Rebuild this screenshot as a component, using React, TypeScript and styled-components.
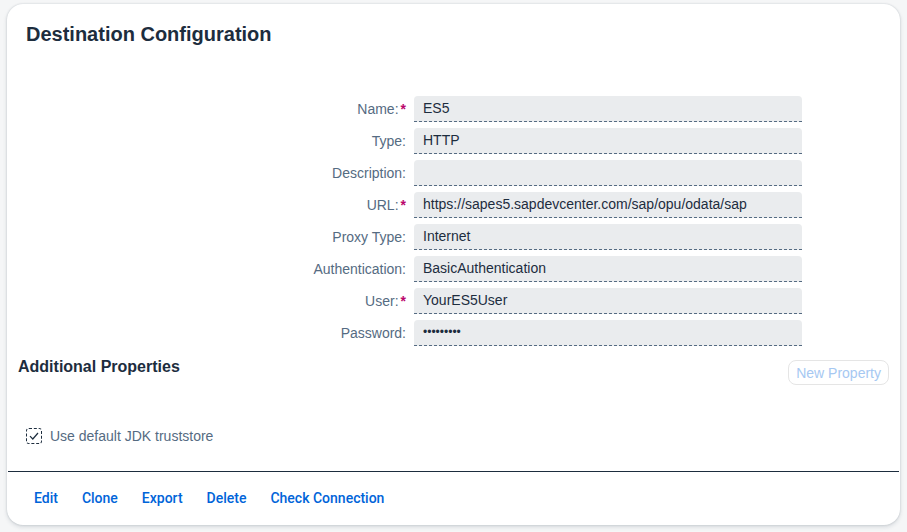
import React from 'react';
import styled, { createGlobalStyle } from 'styled-components';

const GlobalStyle = createGlobalStyle`
  html, body {
    margin: 0;
    padding: 0;
    background: #f5f6f7;
  }
  body {
    font-family: "Liberation Sans", Arial, sans-serif;
    color: #1d2d3e;
  }
`;

interface Field {
  label: string;
  value: string;
  required?: boolean;
}

const fields: Field[] = [
  { label: 'Name:', value: 'ES5', required: true },
  { label: 'Type:', value: 'HTTP' },
  { label: 'Description:', value: '' },
  { label: 'URL:', value: 'https://sapes5.sapdevcenter.com/sap/opu/odata/sap', required: true },
  { label: 'Proxy Type:', value: 'Internet' },
  { label: 'Authentication:', value: 'BasicAuthentication' },
  { label: 'User:', value: 'YourES5User', required: true },
  { label: 'Password:', value: '•••••••••' },
];

const actions = ['Edit', 'Clone', 'Export', 'Delete', 'Check Connection'];

const Page = styled.div`
  padding: 4px 7px 7px 7px;
  height: 532px;
  box-sizing: border-box;
`;

const Card = styled.div`
  background: #fff;
  border-radius: 16px;
  box-shadow: 0 0 2px rgba(34, 53, 72, 0.2), 0 2px 4px rgba(34, 53, 72, 0.15);
  height: 100%;
  box-sizing: border-box;
  display: flex;
  flex-direction: column;
  overflow: hidden;
`;

const Title = styled.h2`
  margin: 0;
  padding: 18px 19px 0 19px;
  font-size: 20px;
  font-weight: 700;
  line-height: 24px;
  color: #1d2d3e;
`;

const Form = styled.div`
  display: grid;
  grid-template-columns: 399px 388px;
  column-gap: 8px;
  row-gap: 6px;
  margin-top: 50px;
`;

const Label = styled.div`
  text-align: right;
  font-size: 14px;
  line-height: 26px;
  color: #556b82;
`;

const Star = styled.span`
  color: #ba066c;
  font-weight: 700;
  margin-left: 2px;
`;

const Input = styled.div<{ $secret?: boolean }>`
  height: 26px;
  box-sizing: border-box;
  background: #eaecee;
  border-radius: 4px 4px 0 0;
  border-bottom: 1px dashed #556b82;
  padding: 0 9px;
  font-size: ${(p) => (p.$secret ? '12px' : '14px')};
  line-height: 25px;
  color: #1d2d3e;
  white-space: nowrap;
  overflow: hidden;
`;

const SectionRow = styled.div`
  display: flex;
  justify-content: space-between;
  align-items: flex-start;
  padding: 0 11px;
  margin-top: 9px;
`;

const SectionTitle = styled.h3`
  margin: 0;
  font-size: 16px;
  font-weight: 700;
  line-height: 24px;
  color: #1d2d3e;
`;

const GhostButton = styled.button`
  margin-top: 5px;
  height: 25px;
  padding: 0 7px;
  border: 1px solid #e5e5e5;
  border-radius: 8px;
  background: #fff;
  font-family: inherit;
  font-size: 14px;
  color: #a6c8f2;
  cursor: default;
`;

const CheckRow = styled.label`
  display: flex;
  align-items: center;
  gap: 8px;
  padding-left: 19px;
  margin-top: 43px;
  font-size: 14px;
  color: #556b82;
`;

const CheckBox = styled.span`
  width: 16px;
  height: 16px;
  box-sizing: border-box;
  border: 1px dashed #1d2d3e;
  border-radius: 3px;
  display: flex;
  align-items: center;
  justify-content: center;
`;

const Divider = styled.div`
  margin: auto 1px 0 1px;
  height: 1px;
  background: #1d2d3e;
`;

const Footer = styled.div`
  display: flex;
  gap: 24px;
  padding: 0 27px;
  height: 53px;
  align-items: center;
  padding-bottom: 1px;
  box-sizing: border-box;
`;

const ActionLink = styled.a`
  font-family: Roboto, "Liberation Sans", sans-serif;
  font-size: 14px;
  font-weight: 500;
  color: #0064d9;
  text-decoration: none;
  cursor: pointer;
`;

const App = () => {
  return (
    <>
      <GlobalStyle />
      <Page>
        <Card>
          <Title>Destination Configuration</Title>
          <Form>
            {fields.map((f) => (
              <React.Fragment key={f.label}>
                <Label>
                  {f.label}
                  {f.required && <Star>*</Star>}
                </Label>
                <Input $secret={f.label === 'Password:'}>{f.value}</Input>
              </React.Fragment>
            ))}
          </Form>
          <SectionRow>
            <SectionTitle>Additional Properties</SectionTitle>
            <GhostButton disabled>New Property</GhostButton>
          </SectionRow>
          <CheckRow>
            <CheckBox>
              <svg width="12" height="12" viewBox="0 0 12 12">
                <path d="M2 6.2 L4.8 9 L10 3" fill="none" stroke="#1d2d3e" strokeWidth="1.2" />
              </svg>
            </CheckBox>
            Use default JDK truststore
          </CheckRow>
          <Divider />
          <Footer>
            {actions.map((a) => (
              <ActionLink key={a}>{a}</ActionLink>
            ))}
          </Footer>
        </Card>
      </Page>
    </>
  );
};

export default App;
